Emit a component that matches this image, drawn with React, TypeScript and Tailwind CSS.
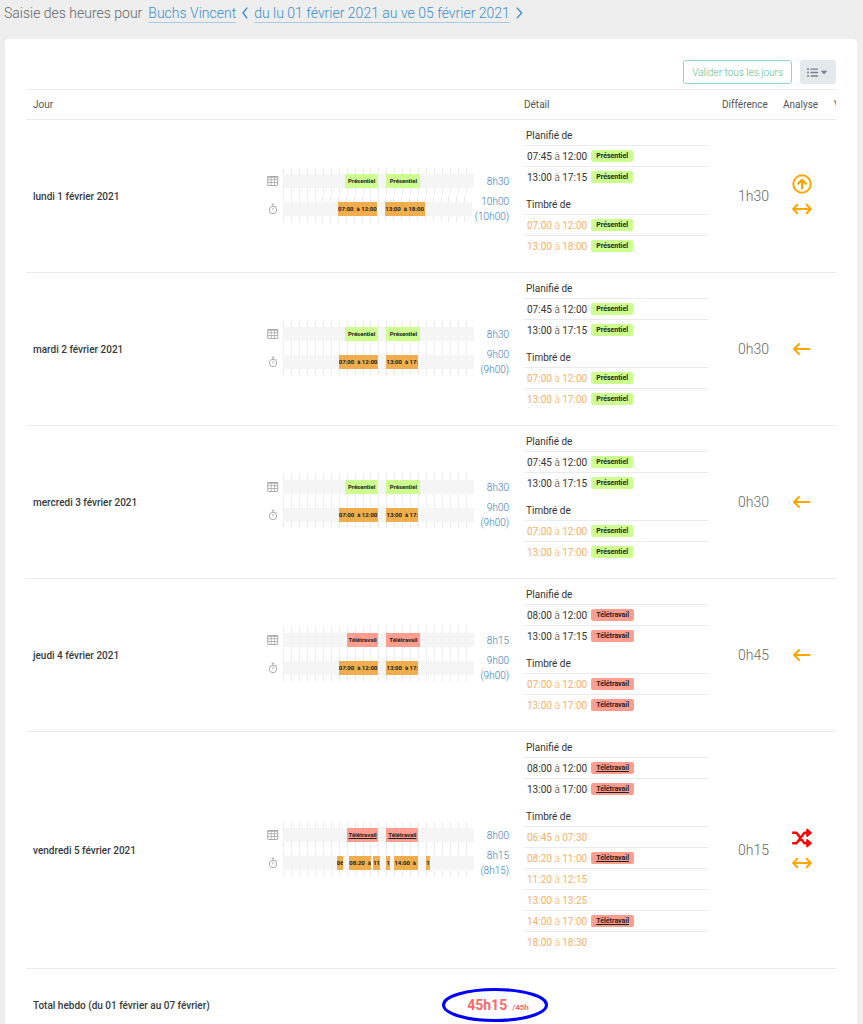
import type { ReactNode } from "react";
import { FaCaretDown, FaListUl } from "react-icons/fa";

type Place = "Présentiel" | "Télétravail";
type Mark = "up" | "both" | "left" | "shuffle";

interface Slot {
  from: string;
  to: string;
  place?: Place;
}

interface Day {
  label: string;
  planned: Slot[];
  stamped: Slot[];
  plannedTotal: string;
  stampedTotal: string;
  diff: string;
  marks: Mark[];
  underlined?: boolean;
}

const P: Place = "Présentiel";
const T: Place = "Télétravail";

const days: Day[] = [
  {
    label: "lundi 1 février 2021",
    planned: [
      { from: "07:45", to: "12:00", place: P },
      { from: "13:00", to: "17:15", place: P },
    ],
    stamped: [
      { from: "07:00", to: "12:00", place: P },
      { from: "13:00", to: "18:00", place: P },
    ],
    plannedTotal: "8h30",
    stampedTotal: "10h00",
    diff: "1h30",
    marks: ["up", "both"],
  },
  {
    label: "mardi 2 février 2021",
    planned: [
      { from: "07:45", to: "12:00", place: P },
      { from: "13:00", to: "17:15", place: P },
    ],
    stamped: [
      { from: "07:00", to: "12:00", place: P },
      { from: "13:00", to: "17:00", place: P },
    ],
    plannedTotal: "8h30",
    stampedTotal: "9h00",
    diff: "0h30",
    marks: ["left"],
  },
  {
    label: "mercredi 3 février 2021",
    planned: [
      { from: "07:45", to: "12:00", place: P },
      { from: "13:00", to: "17:15", place: P },
    ],
    stamped: [
      { from: "07:00", to: "12:00", place: P },
      { from: "13:00", to: "17:00", place: P },
    ],
    plannedTotal: "8h30",
    stampedTotal: "9h00",
    diff: "0h30",
    marks: ["left"],
  },
  {
    label: "jeudi 4 février 2021",
    planned: [
      { from: "08:00", to: "12:00", place: T },
      { from: "13:00", to: "17:15", place: T },
    ],
    stamped: [
      { from: "07:00", to: "12:00", place: T },
      { from: "13:00", to: "17:00", place: T },
    ],
    plannedTotal: "8h15",
    stampedTotal: "9h00",
    diff: "0h45",
    marks: ["left"],
  },
  {
    label: "vendredi 5 février 2021",
    planned: [
      { from: "08:00", to: "12:00", place: T },
      { from: "13:00", to: "17:00", place: T },
    ],
    stamped: [
      { from: "06:45", to: "07:30" },
      { from: "08:20", to: "11:00", place: T },
      { from: "11:20", to: "12:15" },
      { from: "13:00", to: "13:25" },
      { from: "14:00", to: "17:00", place: T },
      { from: "18:00", to: "18:30" },
    ],
    plannedTotal: "8h00",
    stampedTotal: "8h15",
    diff: "0h15",
    marks: ["shuffle", "both"],
    underlined: true,
  },
];

const placeColor: Record<Place, string> = {
  "Présentiel": "bg-[#ccff90]",
  "Télétravail": "bg-[#ff9e8e]",
};

const hours = Array.from({ length: 24 }, (_, h) => h);

// "07:45" -> share of the day in %
function toPercent(time: string) {
  const [h, m] = time.split(":").map(Number);
  return ((h * 60 + m) / 1440) * 100;
}

function GridIcon() {
  return (
    <svg width="12" height="12" viewBox="0 0 12 12" fill="none" stroke="#aaa" className="shrink-0">
      <rect x="0.75" y="1.5" width="10" height="9" rx="0.5" />
      <path d="M0.5 2h10.5" strokeWidth="1.4" />
      <path d="M0.5 4.7h10.5M0.5 7.5h10.5M4.2 2v8.5M7.6 2v8.5" strokeWidth="0.8" />
    </svg>
  );
}

function StopwatchIcon() {
  return (
    <svg width="12" height="12" viewBox="0 0 12 12" fill="none" stroke="#aaa" className="shrink-0">
      <circle cx="6" cy="7" r="3.7" />
      <path d="M4.6 1.2h2.8M6 1.2v2M6 5v2.3M9 3.2l0.8 0.8" />
    </svg>
  );
}

function MarkIcon({ mark }: { mark: Mark }) {
  if (mark === "shuffle") {
    return (
      <svg width="20" height="20" viewBox="0 0 20 20" fill="none" stroke="#ff0000" strokeWidth="2.4">
        <path d="M0.2 4.8h4.3L12.4 15.2H16M0.2 15.2h4.3L12.4 4.8H16" strokeLinejoin="round" />
        <path d="M15 1.4v6.8L19 4.8zM15 11.8v6.8l4-3.4z" fill="#ff0000" strokeWidth="1.6" strokeLinejoin="round" />
      </svg>
    );
  }
  return (
    <svg
      width="20"
      height="20"
      viewBox="0 0 20 20"
      fill="none"
      stroke="#ffa500"
      strokeWidth="2"
      strokeLinecap="round"
      strokeLinejoin="round"
    >
      {mark === "up" && (
        <>
          <circle cx="10" cy="10" r="8.7" />
          <path d="M10 14.4V6.2M6.2 9.6L10 5.8l3.8 3.8" strokeWidth="2.2" />
        </>
      )}
      {mark === "both" && <path d="M1.5 10h17M5.3 5.8L1.2 10l4.1 4.2M14.7 5.8l4.1 4.2-4.1 4.2" />}
      {mark === "left" && <path d="M2 10h15.5M7 5l-5 5 5 5" />}
    </svg>
  );
}

interface TrackProps {
  icon: ReactNode;
  children: ReactNode;
  total: ReactNode;
}

function Track({ icon, children, total }: TrackProps) {
  return (
    <div className="flex items-center">
      {icon}
      <div className="ml-1 grid h-[26px] min-w-0 flex-1 grid-cols-1">
        <div className="col-start-1 row-start-1 flex">
          {hours.map((h) => (
            <span key={h} className="flex-1 border-l border-[#ebebeb]" />
          ))}
        </div>
        <div className="col-start-1 row-start-1 flex h-3.5 self-center bg-[#f5f5f5]">{children}</div>
      </div>
      <div className="ml-[3px] min-w-8 text-right text-[10px] leading-[15px] font-light text-[#337ab7]">{total}</div>
    </div>
  );
}

function Bars({ slots, stamped, underlined }: { slots: Slot[]; stamped?: boolean; underlined?: boolean }) {
  return (
    <>
      {slots.map((slot, i) => {
        const start = toPercent(slot.from);
        const previous = i > 0 ? toPercent(slots[i - 1].to) : 0;
        const color = stamped || !slot.place ? "bg-[#f0ad4e]" : placeColor[slot.place];
        return (
          <span
            key={slot.from}
            className={`shrink-0 overflow-hidden text-[6px] leading-[14px] font-bold whitespace-pre text-[#222] ${color} ${
              stamped ? "" : "text-center"
            } ${underlined && !stamped ? "underline" : ""}`}
            style={{ marginLeft: `${start - previous}%`, width: `${toPercent(slot.to) - start}%` }}
          >
            {stamped ? `${slot.from}  à ${slot.to}` : slot.place}
          </span>
        );
      })}
    </>
  );
}

function SlotList({ title, slots, stamped, underlined }: { title: string; slots: Slot[]; stamped?: boolean; underlined?: boolean }) {
  return (
    <div>
      <div className="h-[19px] px-0.5 text-[10px] leading-[20px] text-[#333]">{title}</div>
      <ul>
        {slots.map((slot) => (
          <li key={slot.from} className="flex h-[21px] items-center gap-1 border-t border-[#e9ecef] px-[3px]">
            <span className={`text-[10px] ${stamped ? "text-[#f4b26a]" : "text-[#333]"}`}>
              {slot.from} <span className="font-light">à</span> {slot.to}
            </span>
            {slot.place && (
              <span
                className={`rounded-xs px-[5px] text-[7px] leading-[12px] font-bold text-[#222] ${placeColor[slot.place]} ${
                  underlined ? "underline" : ""
                }`}
              >
                {slot.place}
              </span>
            )}
          </li>
        ))}
      </ul>
    </div>
  );
}

function DayRow({ day }: { day: Day }) {
  return (
    <tr className="border-b border-[#e9ecef]">
      <th scope="row" className="px-[7px] text-left text-[10px] font-medium text-[#373a3c]">
        {day.label}
      </th>
      <td className="px-2">
        <Track icon={<GridIcon />} total={day.plannedTotal}>
          <Bars slots={day.planned} underlined={day.underlined} />
        </Track>
        <Track
          icon={<StopwatchIcon />}
          total={
            <>
              {day.stampedTotal}
              <br />({day.stampedTotal})
            </>
          }
        >
          <Bars slots={day.stamped} stamped />
        </Track>
      </td>
      <td className="px-[7px] pt-1.5 pb-4">
        <div className="flex flex-col gap-2">
          <SlotList title="Planifié de" slots={day.planned} underlined={day.underlined} />
          <SlotList title="Timbré de" slots={day.stamped} underlined={day.underlined} stamped />
        </div>
      </td>
      <td className="px-[7px] text-right text-[14px] font-light text-[#666]">{day.diff}</td>
      <td>
        <div className="flex flex-col items-center gap-[5px]">
          {day.marks.map((mark) => (
            <MarkIcon key={mark} mark={mark} />
          ))}
        </div>
      </td>
      <td />
    </tr>
  );
}

export default function App() {
  return (
    <div className="min-h-screen bg-[#eee] font-[Roboto,sans-serif] text-[#373a3c]">
      <h1 className="flex h-[39px] items-start gap-[6px] px-1 pt-1 text-[14px] leading-[18px] font-light text-[#666]">
        <span>Saisie des heures pour</span>
        <a href="#employe" className="border-b border-[#a9cce6] text-[#3d8fcb]">
          Buchs Vincent
        </a>
        <a href="#precedent" aria-label="Semaine précédente" className="pt-[3px]">
          <svg width="6" height="12" viewBox="0 0 6 12" fill="none" stroke="#3d8fcb" strokeWidth="1.4">
            <path d="M5.2 0.6L1 6l4.2 5.4" />
          </svg>
        </a>
        <a href="#periode" className="border-b border-[#a9cce6] text-[#3d8fcb]">
          du lu 01 février 2021 au ve 05 février 2021
        </a>
        <a href="#suivant" aria-label="Semaine suivante" className="pt-[3px]">
          <svg width="7" height="12" viewBox="0 0 7 12" fill="none" stroke="#3d8fcb" strokeWidth="1.4">
            <path d="M0.8 0.6L5.6 6 0.8 11.4" />
          </svg>
        </a>
      </h1>

      <main className="mr-1.5 ml-[5px] rounded-t bg-white px-[21px] pt-[21px] pb-0.5">
        <div className="mb-[5px] flex justify-end gap-2">
          <button
            type="button"
            className="h-6 rounded-[3px] border border-[#8fdcbb] px-2 text-[10px] font-light text-[#5cc08c]"
          >
            Valider tous les jours
          </button>
          <button
            type="button"
            aria-label="Options"
            className="flex h-6 items-center gap-px rounded-[3px] bg-[#e4e9eb] px-[7px] text-[#76838f]"
          >
            <FaListUl size={11} />
            <FaCaretDown size={10} />
          </button>
        </div>

        <table className="w-full table-fixed border-collapse">
          <colgroup>
            <col />
            <col className="w-[258px]" />
            <col className="w-[198px]" />
            <col className="w-[61px]" />
            <col className="w-[51px]" />
            <col className="w-[9px]" />
          </colgroup>
          <thead>
            <tr className="h-[30px] border-y border-[#e9ecef] text-left text-[10px] text-[#555]">
              <th className="px-[7px] font-normal" colSpan={2}>
                Jour
              </th>
              <th className="px-[7px] font-normal">Détail</th>
              <th className="px-[7px] font-normal">Différence</th>
              <th className="px-[7px] font-normal">Analyse</th>
              <th className="overflow-hidden pl-[7px] font-normal">V</th>
            </tr>
          </thead>
          <tbody>
            {days.map((day) => (
              <DayRow key={day.label} day={day} />
            ))}
          </tbody>
          <tfoot>
            <tr>
              <th scope="row" className="px-[7px] pt-[19px] text-left text-[10px] font-medium whitespace-nowrap">
                Total hebdo (du 01 février au 07 février)
              </th>
              <td colSpan={5} className="pt-[19px] pl-[183px]">
                <div className="relative flex h-[34px] w-[106px] items-center justify-center pl-1.5 text-[#f96868]">
                  <div className="flex items-baseline gap-[5px]">
                    <strong className="text-[14px] font-bold">45h15</strong>
                    <span className="text-[8px] font-bold">/45h</span>
                  </div>
                  <svg className="absolute inset-0" width="106" height="34" viewBox="0 0 106 34" fill="none">
                    <ellipse cx="53" cy="17" rx="51.5" ry="15.5" stroke="#0000ff" strokeWidth="3" />
                  </svg>
                </div>
              </td>
            </tr>
          </tfoot>
        </table>
      </main>
    </div>
  );
}
